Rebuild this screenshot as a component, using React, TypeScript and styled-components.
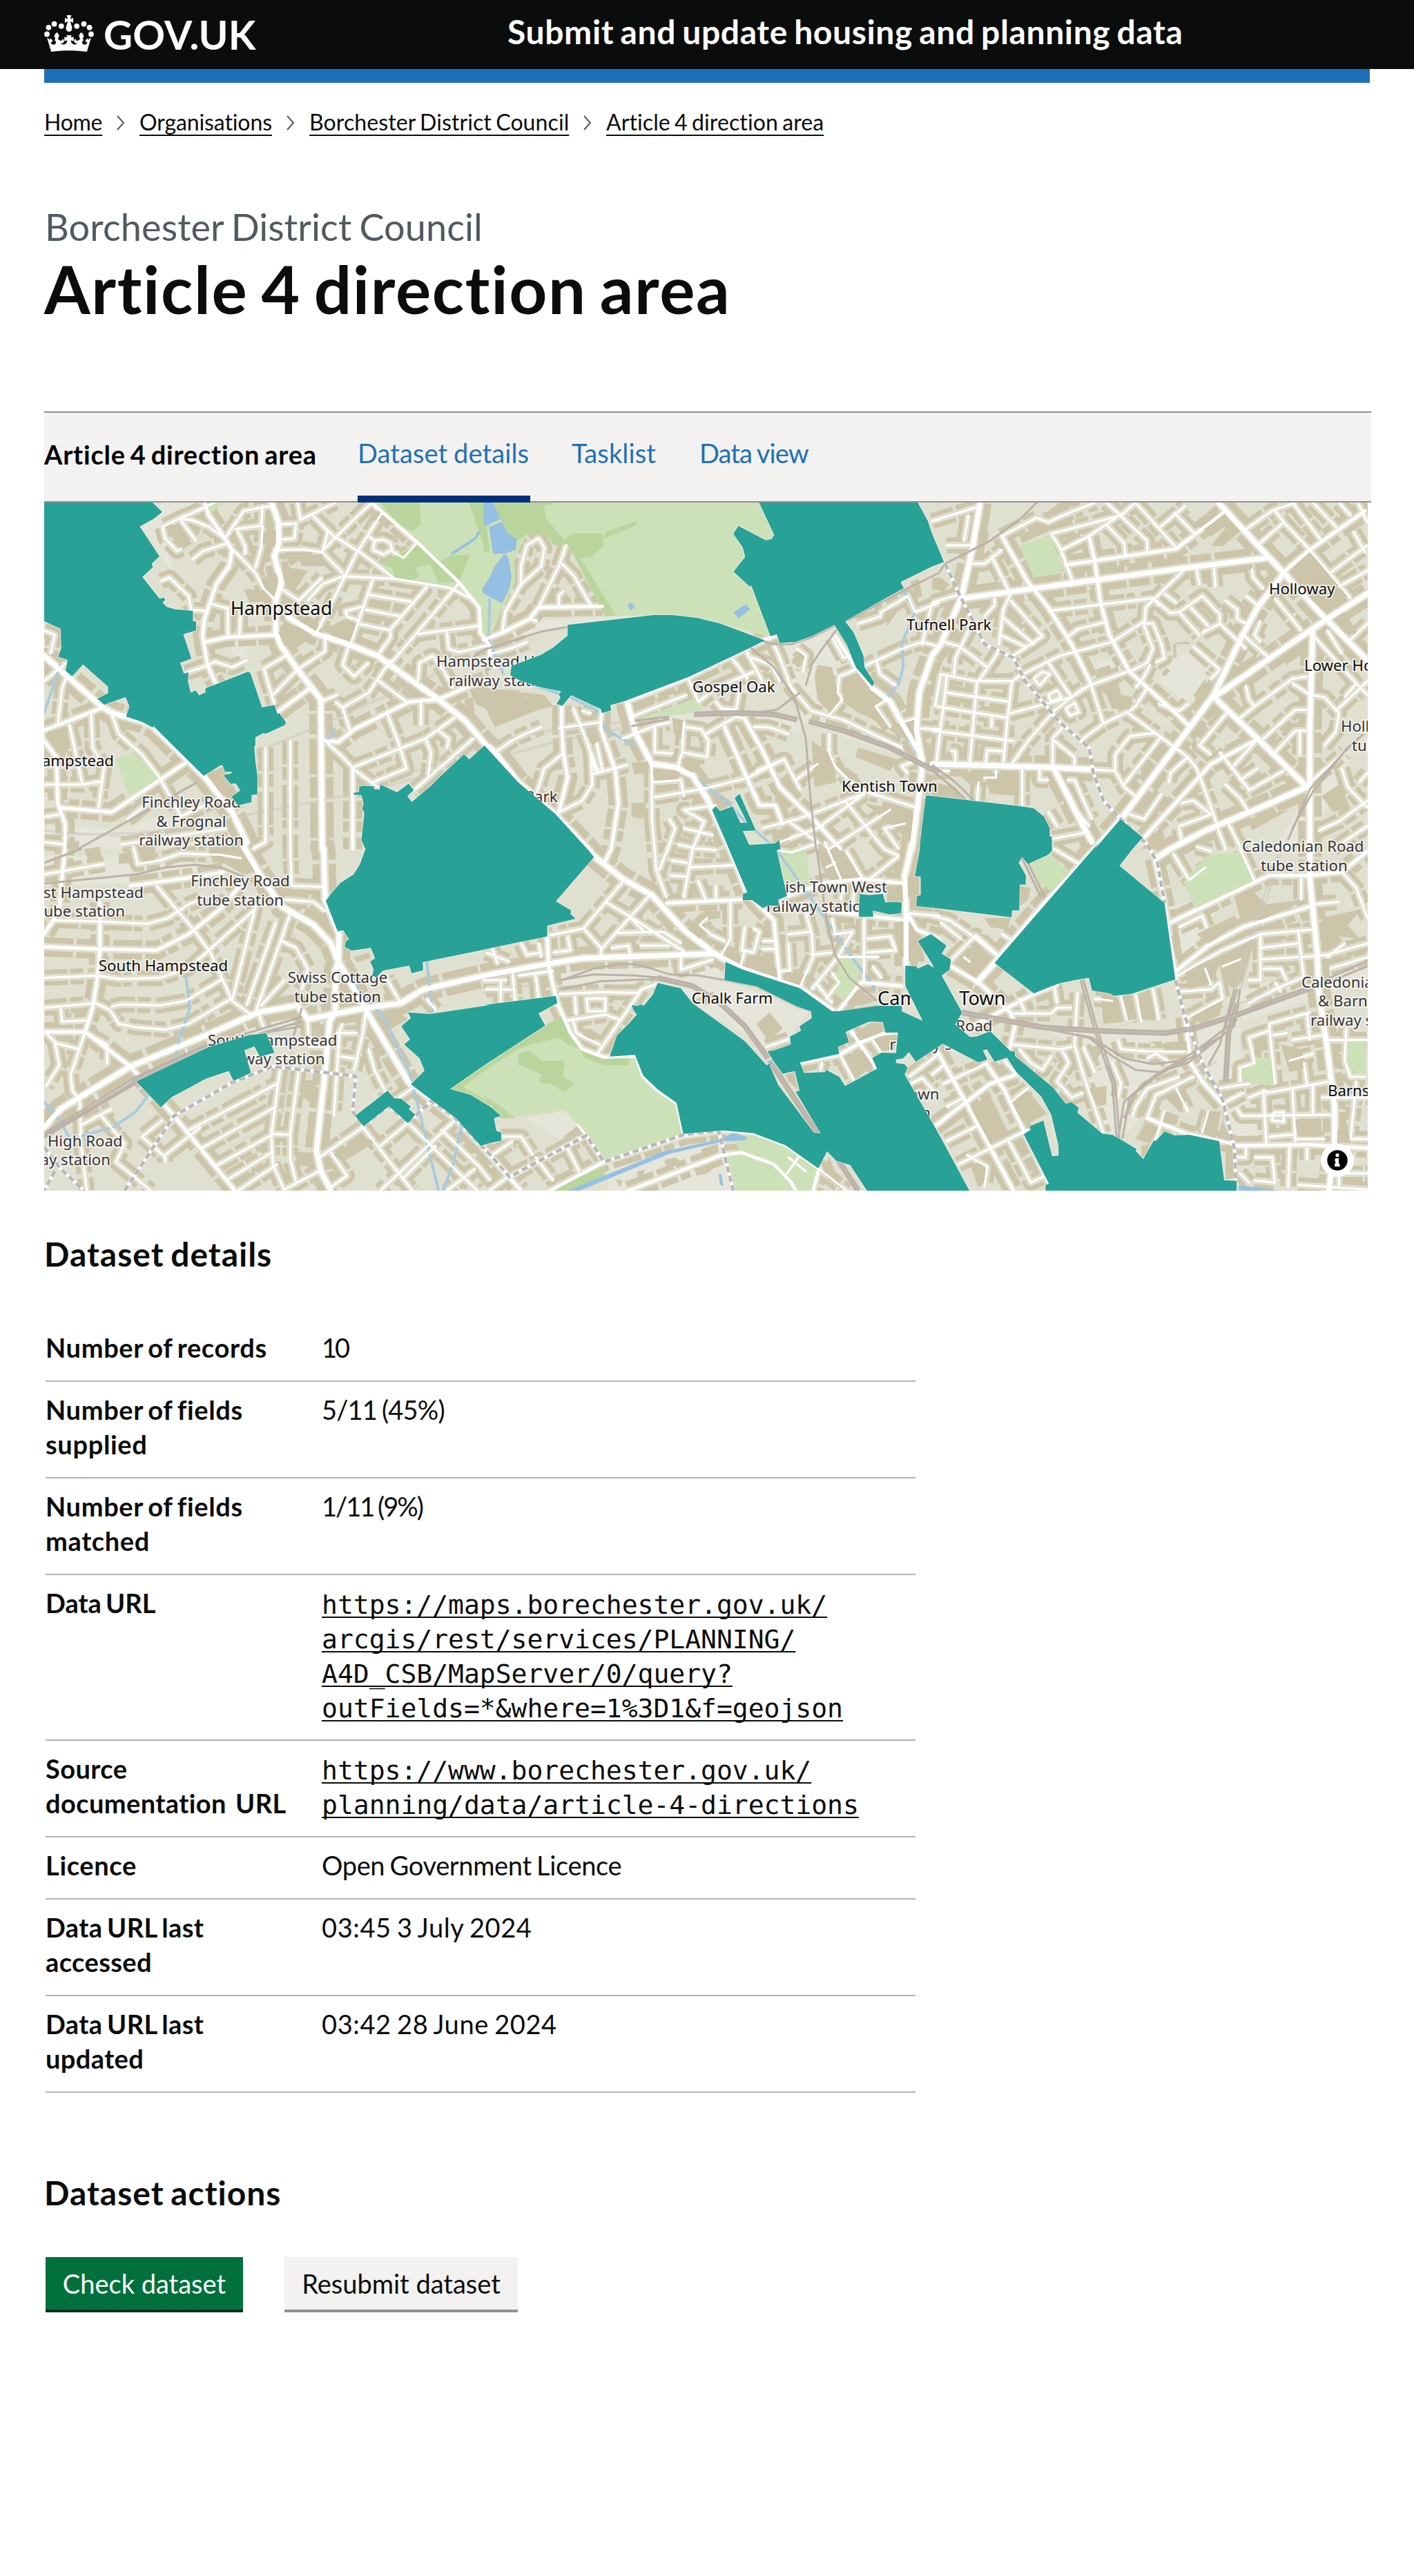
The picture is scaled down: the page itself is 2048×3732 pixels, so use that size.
import React from "react";
import styled, { createGlobalStyle } from "styled-components";

const ink = "#0b0c0c";
const sans = `Lato, "Open Sans", "Noto Sans", sans-serif`;

const GlobalStyle = createGlobalStyle`
  body {
    margin: 0;
    background: #fff;
    color: ${ink};
    font-family: ${sans};
    font-variant-ligatures: none;
    word-spacing: -3px;
  }
  *, *::before, *::after { box-sizing: border-box; }
  h1, h2, p, ol, ul, dl, dd, dt { margin: 0; padding: 0; font-weight: inherit; }
`;

const Page = styled.div`
  width: 2048px;
  min-height: 3732px;
  background: #fff;
`;

const Header = styled.header`
  height: 100px;
  padding: 0 64px;
  background: ${ink};
  color: #fff;
  display: flex;
`;

const Logo = styled.a`
  width: 671px;
  display: flex;
  gap: 14px;
  color: #fff;
  svg { margin-top: 22px; }
`;

const LogoText = styled.span`
  font-size: 58px;
  font-weight: 700;
  line-height: 99px;
  letter-spacing: 0.2px;
`;

const ServiceName = styled.span`
  font-size: 48px;
  font-weight: 700;
  line-height: 92px;
  letter-spacing: 0.62px;
  white-space: nowrap;
`;

const Main = styled.main`
  padding: 0 64px;
`;

const BlueBar = styled.div`
  height: 20px;
  background: #1d70b8;
`;

const Crumbs = styled.ol`
  display: flex;
  margin-top: 37px;
  height: 40px;
  list-style: none;
  word-spacing: -2px;
`;

const Crumb = styled.li<{ $w: number; $track: number }>`
  display: flex;
  align-items: center;
  font-size: 32px;
  line-height: 40px;
  white-space: nowrap;
  svg { margin: 2px 21px 0 21px; }
  a {
    width: ${(p) => p.$w}px;
    letter-spacing: ${(p) => p.$track}px;
    text-decoration: underline;
    text-decoration-thickness: 2px;
    text-underline-offset: 6px;
    text-decoration-skip-ink: none;
  }
`;

const Caption = styled.p`
  margin-top: 102px;
  padding-left: 1px;
  font-size: 54px;
  line-height: 60px;
  letter-spacing: 0.1px;
  color: #505a5f;
`;

const Title = styled.h1`
  margin-top: 9px;
  font-size: 96px;
  line-height: 100px;
  font-weight: 700;
  letter-spacing: 1.65px;
  word-spacing: -6px;
`;

const DatasetNav = styled.nav`
  margin-top: 128px;
  width: 1922px;
  height: 132px;
  display: flex;
  gap: 60px;
  background: #f3f2f1;
  box-shadow: inset 0 2px #929191, inset 0 -2px #929191;
  font-size: 38px;
  white-space: nowrap;
`;

const NavLabel = styled.span`
  width: 394px;
  color: #000;
  font-weight: 700;
  line-height: 124px;
  letter-spacing: 0.78px;
`;

const Tab = styled.a<{ $active?: boolean; $w: number; $track?: number }>`
  width: ${(p) => p.$w}px;
  height: 132px;
  line-height: 120px;
  letter-spacing: ${(p) => p.$track ?? 0}px;
  word-spacing: -1px;
  color: #1d70b8;
  border-bottom: 10px solid ${(p) => (p.$active ? "#003078" : "transparent")};
`;

const MapFrame = styled.div`
  width: 1917px;
  height: 997px;
  svg { display: block; }
`;

const SectionTitle = styled.h2<{ $top: number }>`
  margin-top: ${(p) => p.$top}px;
  margin-bottom: -2px;
  font-size: 48px;
  line-height: 50px;
  font-weight: 700;
  letter-spacing: 1px;
`;

const Summary = styled.dl`
  margin: 72px 0 0 2px;
  width: 1260px;
`;

const Row = styled.div`
  display: flex;
  padding: 15px 0 23px;
  border-bottom: 2px solid #b1b4b6;
  font-size: 38px;
  line-height: 50px;
`;

const Key = styled.dt<{ $track?: number }>`
  width: 400px;
  flex: none;
  font-weight: 700;
  letter-spacing: ${(p) => p.$track ?? 0.65}px;
  white-space: pre-line;
`;

const Value = styled.dd<{ $track?: number }>`
  letter-spacing: ${(p) => p.$track ?? 0}px;
  word-spacing: -2px;
  white-space: pre-line;
`;

const UrlValue = styled(Value)`
  padding-top: 3px;
  margin-bottom: -3px;
  font-family: "DejaVu Sans Mono", monospace;
  a {
    text-decoration: underline;
    text-decoration-thickness: 2px;
    text-underline-offset: 4px;
    text-decoration-skip-ink: none;
  }
`;

const Actions = styled.div`
  display: flex;
  gap: 60px;
  margin: 70px 0 0 2px;
`;

const Button = styled.button<{ $secondary?: boolean; $w: number }>`
  width: ${(p) => p.$w}px;
  height: 76px;
  padding: 1px 0 0;
  border: 0;
  font-family: ${sans};
  font-size: 38px;
  font-variant-ligatures: none;
  line-height: 75px;
  text-align: center;
  color: ${(p) => (p.$secondary ? ink : "#fff")};
  background: ${(p) => (p.$secondary ? "#f3f2f1" : "#00703c")};
  box-shadow: 0 4px 0 ${(p) => (p.$secondary ? "#929191" : "#002d18")};
`;

/* ---------- Map data ---------- */

const sheets: Record<string, [number, number]> = {
  NW: [50, 720], N: [700, 720], NE: [1350, 720],
  SW: [50, 1220], S: [700, 1220], SE: [1350, 1220],
};

function project(line: string): string {
  let origin = sheets.NW;
  const out: string[] = [];
  for (const token of line.trim().split(/\s+/)) {
    if (sheets[token]) { origin = sheets[token]; continue; }
    const [x, y] = token.split(",").map(Number);
    out.push(`${(origin[0] + x / 2.3758).toFixed(1)} ${(origin[1] + y / 3).toFixed(1)}`);
  }
  return "M" + out.join("L");
}
const lines = (all: string) => all.trim().split("\n").map(project).join("");
const areas = (all: string) => all.trim().split("\n").map((l) => project(l) + "Z").join("");

const majorRoads = lines(`
NW 33,690 235,915 270,940 370,975 410,1000 585,1215 680,1370 730,1500 SW 720,20 770,130 850,280 960,360 1020,440 1045,520 1065,560 1145,740 1290,1050
NW 815,24 840,110 840,200 825,260 850,370 830,450 830,590 850,650 905,750 985,880 990,1530 SW 995,30 1000,250 1048,400 1045,520 1035,560 1035,740 1015,780 1000,1000 970,1340 985,1430 1020,1515
NW 870,520 960,590 1080,640 1180,690 1300,800 1390,880 1480,970 1548,1070 N 40,1110 120,1240 240,1370 360,1530 S 380,60 480,160 580,230 690,380 790,480 890,550 1090,635 1200,733
SW 33,1240 90,1160 330,975 590,840 770,740 905,710 940,770 1140,720 1260,700 1340,640 1548,580 S 220,530 340,505 790,485
NE 165,24 140,220 100,440 30,640 N 1544,690 1500,850 1490,1010 1510,1150
N 1338,830 1400,890 1440,980 1500,1110 1510,1170 1500,1290 1475,1530 S 1475,10 1450,150 1455,300 1455,540
NE 110,440 480,375 860,310 1150,265
NE 985,24 1150,250 1210,330 1340,510 1498,710
NE 1205,340 1120,480 1060,620 970,860 840,1080 650,1400 560,1530 SE 380,280 215,525 155,610
NE 1498,420 1360,530 1220,650 970,870 1120,1050 1290,1260
NE 1310,580 1300,1000 1300,1260 1300,1500 SE 1300,160 1325,480 1330,640 1360,900 1385,1150 1385,1320 1365,1515
NE 1290,1260 1130,1350 940,1450 820,1530 SE 770,70
NE 415,1170 520,1430 550,1500
NE 0,1160 410,1175 555,1185
N 495,890 525,1030 580,1160 660,1175 720,1210 770,1310 850,1530 S 908,220
`);

const mediumRoads = lines(`
NW 1160,24 1200,70 1320,200 1460,370 1530,480 1535,590 1568,650 N 20,700 40,740
NW 33,1015 235,915
NW 585,24 600,80 655,180 680,230 670,300 625,380 585,530 578,600 595,730 625,815
NW 520,1155 265,1370 85,1350
NW 33,1060 75,1130 80,1330 105,1420 105,1530 SW 95,150 85,300 33,400
NW 590,630 660,610 830,600
NW 1390,880 1290,890 1100,1010 1045,1065 1000,1060
NW 1095,1180 1095,1530
NW 835,935 955,825
NW 1390,880 1500,820 1568,790
SW 33,825 175,825 330,975 480,1190 690,1515
SW 33,455 220,465 420,470 530,400 640,290 700,200
SW 1290,1050 1450,1205 1568,1360 S 0,1330 130,1515
SW 225,260 225,465 215,600 200,720 175,820
SW 330,190 560,150 650,130
N 0,620 65,590 160,530 190,480 410,475
N 490,890 705,785 970,620 1010,600
N 270,905 270,1000 275,1110 290,1220 260,1370
N 405,930 405,1010 455,1190 465,1330 440,1530 S 420,80
N 900,965 960,1100 1020,1260 1150,1420 1230,1530
N 830,1000 900,1200 950,1340 1005,1340 1030,1420
N 1210,600 1280,740 1338,830
S 220,410 225,540 255,700 300,830 340,900 415,935 525,930 550,1020 600,1080 665,1135 690,1270
S 908,220 960,290 1000,340 1020,600
S 630,265 890,250
S 1045,235 1180,175 1305,160 1450,180
S 1180,300 1455,340
S 1225,730 1300,610 1440,625
S 230,1515 415,1390 690,1275 825,1253 930,1265 1040,1318 1155,1418 1135,1515
S 500,1515 820,1360 890,1350 1000,1400 1060,1480 1075,1515
S 1090,960 1225,925 1300,870 1380,830 1425,828
S 1265,820 1355,985
S 1455,300 1490,380 1568,420
SE 820,350 1000,240 1160,145 1300,145 1410,130 1498,40
SE 840,560 950,450 1070,370 1300,280
SE 65,540 160,610 230,690 270,740 285,800 265,910
SE 140,800 260,720 350,660 430,620
SE 0,870 120,1140 280,1515
SE 190,970 250,1080 400,1480
SE 10,1235 200,1050 290,1010
SE 870,760 890,960 930,1040 1000,1140
SE 1040,1320 1300,1315 1498,1330
SE 740,1200 880,1270 1000,1300 1040,1315
SE 765,70 800,265 840,600
NE 240,170 330,370 400,480 480,640 550,820
NE 540,170 560,280 580,460 610,600 680,760 830,930 880,990
NE 460,295 840,225 1010,60
NE 1215,320 1300,230 1490,60
NE 1110,1060 960,1160 730,1480
`);

const minorRoads = lines(`
NW 110,780 95,830 80,990
NW 33,800 110,720
NW 33,580 70,600 55,680
NW 655,180 720,60 810,40
NW 500,95 540,100 600,130 655,180
NW 520,80 440,130 450,180 490,235 505,225
NW 500,95 555,190
NW 500,95 620,24
NW 545,270 580,235 655,205
NW 680,230 700,250 760,330 790,400 830,450
NW 690,140 780,125 785,40
NW 760,310 780,220 785,130
NW 700,150 725,215 725,250
NW 840,120 900,115 895,180 850,185
NW 830,230 930,228 990,240 1060,330
NW 905,24 915,100 1035,24
NW 960,85 1030,170 1120,240 1235,350
NW 1160,24 1040,170 990,235
NW 960,85 1010,150 990,240
NW 1195,70 1110,240 1070,340 1035,430 970,590
NW 1070,345 1240,355 1430,395 1500,440
NW 1070,340 990,380 940,450
NW 850,400 910,450 990,350
NW 1165,355 1090,630
NW 1150,425 1295,455
NW 1140,490 1265,520
NW 1110,550 1225,580
NW 1135,475 1070,495 1075,520 1110,535
NW 1350,390 1225,575 1225,610 1180,690
NW 1460,375 1215,740
NW 1530,560 1320,595
NW 1418,580 1425,660 1460,675 1560,645
NW 1150,170 1170,190 1165,230 1200,250 1230,230 1225,200 1200,185 1170,190
NW 1230,235 1270,265 1315,200
NW 665,480 665,600
NW 710,480 705,600
NW 610,465 665,485
NW 435,365 465,350 530,430 540,490 585,495
NW 590,735 620,715 680,740 730,710
NW 520,765 590,735
NW 790,745 865,690
NW 790,750 825,900
NW 820,860 905,750
NW 905,750 1000,670 1000,620
NW 1090,1170 1060,1130 1000,1060
NW 1225,710 1150,850 1060,915 1085,1015
NW 1035,890 1060,915
NW 1180,795 1280,890
NW 1080,650 1060,730 1100,780 1150,720
NW 1215,945 1250,1060 1280,1180 1165,1240
NW 1095,1175 1345,1050 1445,960
NW 1345,1050 1365,1110 1355,1210
NW 1390,1015 1425,1050 1420,1090
NW 1510,1050 1300,1280
NW 1095,1180 1180,1260
NW 1320,800 1325,720 1370,690 1410,760 1440,830
NW 1330,890 1330,990
NW 880,1060 880,1530 SW 885,190 1000,195
NW 795,1090 795,1500 750,1530
NW 985,890 1040,860
NW 195,945 200,1090 240,1170 220,1350
NW 120,990 165,1250
NW 265,940 290,1030 370,1120 430,1220 500,1380
NW 33,1250 165,1250 235,1235
NW 33,1390 85,1380
NW 500,1390 620,1320
NW 300,1510 660,1440
NW 320,1400 400,1320
NW 33,1500 105,1510
SW 33,140 240,95
SW 340,20 355,95 430,80 500,50 640,55 710,70
SW 70,340 220,345 390,355 460,330 530,270 570,250
SW 175,820 125,1010 130,1080 155,1120 160,1270
SW 420,190 550,385 605,480 680,690 745,750
SW 33,590 220,580 290,595 430,590 530,550 600,470 760,290
SW 33,720 210,700 260,730 290,790 350,805 450,815 530,790 670,685
SW 265,715 300,705 430,710 520,690 640,600
SW 90,720 95,780 180,775
SW 760,280 680,690
SW 830,350 730,710
SW 880,310 760,740
SW 860,600 780,710
SW 850,430 900,460 940,550 920,640
SW 860,250 960,260 1000,300
SW 70,870 85,970 40,1060
SW 40,830 75,875 155,900
SW 175,830 250,880 250,960
SW 770,740 790,810
SW 845,985 815,1270 820,1400 860,1515
SW 910,985 880,1270 880,1380 900,1475
SW 520,1260 835,1050
SW 575,1330 830,1150
SW 620,1410 820,1270
SW 660,1470 815,1350
SW 700,1515 835,1400
SW 860,1510 980,1430
SW 820,1268 880,1272
SW 1140,740 1130,830 1100,990
SW 1060,790 1050,820 1030,1190
SW 1040,830 1110,830
SW 1040,930 1100,940
SW 940,780 945,890 1010,890
SW 1150,900 1170,990 1210,1090
SW 1130,1240 1300,1515
SW 1285,1220 1470,1450 1525,1515
SW 1130,1240 980,1370
SW 1300,1070 1220,1140
SW 1285,1220 1190,1320
SW 1445,1210 1370,1300 1190,1515
SW 1400,1250 1530,1410 1568,1470
SW 1515,1420 1420,1515
SW 1380,1320 1270,1460
SW 1020,1350 1075,1450 1020,1500
SW 230,1190 310,1310 280,1390 400,1515
SW 160,1230 265,1160
SW 370,1280 450,1370 450,1390
SW 450,1360 570,1240
SW 440,1210 370,1280
SW 155,1270 180,1515
SW 1260,700 1210,590
SW 1350,680 1380,730
N 65,590 75,500 130,380 200,300 210,220 190,180 150,210 130,300 130,380
N 285,210 260,300 190,480
N 270,290 310,340 370,470
N 260,480 260,430 275,410
N 30,680 90,660 150,630
N 160,530 185,540
N 260,1005 400,980
N 310,920 340,1010 370,1110 395,1190
N 375,1205 495,1165
N 340,930 370,940
N 360,1070 385,1190
N 410,1190 390,1070
N 270,1120 210,1180 185,1280
N 260,1370 340,1320 375,1250 370,1110
N 40,1110 110,1050 200,1000
N 580,1160 580,1400 590,1530 S 595,120 630,240
N 590,1305 770,1265 910,1220 1035,1140
N 765,1030 870,955 900,965
N 690,980 685,1110 670,1170
N 685,1110 770,1130 775,1060 750,1010 695,1000
N 590,1000 590,1110 650,1115
N 480,1050 560,1010 600,990 640,980
N 580,1240 680,1230 690,1300
N 855,700 910,790
N 905,670 960,800
N 925,700 990,730 1020,800
N 870,925 880,850
N 800,890 820,920 870,925
N 705,790 740,890 800,830 930,760
N 520,950 700,860
N 1000,640 1030,730 1060,830 1130,930 1240,970 1440,1090
N 1080,660 1110,690 1100,760
N 1420,820 1365,770 1355,720
N 1225,780 1320,730 1440,660 1510,630 1568,650
N 1485,500 1568,460
N 1540,480 1510,640
N 1485,500 1460,430 1370,500 1365,520 1290,550
N 1200,610 1240,700 1260,690
N 1440,980 1490,960
N 1500,1005 1568,1010
N 1225,780 1220,850 1235,880 1190,950
N 1400,1000 1350,910 1390,880
N 1190,1030 1190,1110 1210,1170 1290,1270 1490,1350
N 1310,1290 1080,1400 960,1440
N 930,1000 980,1000 1050,1030
N 940,1190 1035,1140 1090,1270
N 1075,1230 1150,1160
N 1150,1440 1310,1290
N 1250,1330 1380,1530 S 1430,60
N 1400,1360 1190,1530
N 1050,1410 1150,1500
N 1450,1420 1380,1440 1430,1530
N 1460,1200 1440,1170 1480,1150
N 1170,1430 1020,1500
N 800,1340 690,1360 760,1410 720,1530 S 690,240
N 640,1400 660,1440 635,1530 S 605,120
N 690,1440 790,1470
S 650,80 700,90
S 645,145 700,150
S 710,110 865,100
S 740,170 765,250
S 800,190 800,250
S 670,10 720,25 800,35
S 850,255 850,420 820,490
S 770,330 745,360 780,400 830,430
S 485,165 345,375 230,405
S 345,375 405,460 405,490
S 420,260 500,320 690,475
S 500,320 550,385
S 570,235 410,460
S 455,395 615,390
S 620,390 680,440
S 440,460 500,450 505,485
S 540,450 640,450
S 680,485 680,555 790,510
S 262,660 400,652 530,655 545,640 600,615
S 545,640 395,915
S 290,775 420,750 465,770
S 355,680 420,680 420,735 360,735 355,680
S 315,670 320,750
S 310,780 320,830 400,880
S 290,410 300,470 240,480
S 900,370 890,470 930,480 950,390 930,375
S 885,540 900,470
S 960,430 1010,430
S 960,465 1010,465
S 1110,310 1130,400 1135,500 1090,630
S 1050,400 1120,390
S 1050,440 1055,560 1020,560
S 1130,490 1200,480
S 1200,330 1210,400 1270,390 1220,500 1130,640
S 1310,335 1310,600
S 1320,420 1400,410 1420,470 1320,480
S 1220,500 1360,500
S 1340,540 1370,590
S 1200,570 1225,610 1180,680
S 1150,620 1200,700
S 1175,0 1230,160
S 1250,40 1310,170
S 1430,60 1330,160
S 1180,110 1210,90
S 1010,35 1060,45 1150,5
S 1240,190 1230,250
S 1280,180 1270,270
S 1465,310 1568,320
S 100,560 110,690
S 180,580 190,680
S 0,600 80,600
S 60,600 60,700
S 130,440 150,490 200,480
S 10,480 90,520
S 30,460 50,530
S 190,440 200,500
S 10,640 100,640
S 120,580 240,560
S 975,890 1055,855
S 415,1390 355,1275 325,1230
S 90,1455 355,1275
S 180,1370 240,1470
S 60,1280 130,1280 170,1360
S 285,1320 330,1430
S 20,1515 90,1450
S 20,1370 100,1300
S 1230,930 1275,1035
S 1335,850 1370,915
S 1165,960 1160,990
S 1160,1425 1250,1515
S 1465,1020 1568,920
S 1470,1050 1510,1025 1550,1080
S 1050,1370 1110,1430
S 1045,1440 1090,1360
NE 0,105 165,40
NE 50,210 135,210
NE 110,190 125,80
NE 140,290 180,290 240,230
NE 0,460 100,420
NE 240,170 360,90 400,110 450,80 560,24
NE 205,260 270,420 245,490 230,640
NE 215,440 215,470 180,520
NE 270,450 380,605 280,690
NE 240,520 350,640
NE 235,600 320,650
NE 410,160 650,80 700,24
NE 410,160 440,220 485,370
NE 445,230 540,170 650,75
NE 600,120 660,200 665,250
NE 600,24 740,190 740,235
NE 700,24 840,220
NE 835,70 900,155
NE 785,130 870,40
NE 400,495 760,440 780,470
NE 865,320 735,480 730,560 760,660 740,720 680,760
NE 465,610 500,575 590,545
NE 320,765 440,690 620,630 730,540
NE 400,720 480,870
NE 270,940 480,870 540,820 670,760
NE 350,790 380,760 405,770 370,820 350,790
NE 400,860 430,840 445,870 410,890 400,860
NE 460,920 490,895 505,935 475,950 460,920
NE 40,630 95,650 190,740
NE 130,570 80,700 75,770
NE 230,670 160,800
NE 30,770 150,800 275,800 310,770
NE 30,770 10,910
NE 50,780 45,850 15,1150
NE 155,800 130,1150
NE 275,800 260,960 245,1160
NE 50,850 265,890
NE 15,910 260,960
NE 0,1015 280,1060
NE 205,960 205,1000
NE 185,1150 190,1100 245,1105
NE 65,1105 80,1105 80,1150
NE 275,1160 330,1060 420,930 520,830
NE 310,1180 310,1340
NE 370,1190 370,1230 400,1230
NE 0,1195 60,1190
NE 220,1190 220,1220 180,1220
NE 160,1240 155,1320
NE 415,1180 415,1050 450,1000
NE 420,1060 490,1130 490,1180
NE 465,1230 490,1230 550,1400
NE 470,1290 500,1370 540,1430
NE 520,1050 590,985 670,935 880,1130 910,1180
NE 550,830 590,985
NE 770,1025 680,1040 630,1120 630,1190 660,1260 710,1310
NE 555,1185 630,1190
NE 790,1040 660,1250
NE 880,1130 820,1200 815,1240
NE 790,1290 730,1400 680,1380
NE 1020,930 920,1080 960,1120
NE 990,1110 1090,1270
NE 1090,1275 1210,1190
NE 1030,1180 1115,1060
NE 1060,1230 1120,1180
NE 910,1180 940,1280 980,1420
NE 860,1330 900,1320 960,1380 850,1430
NE 1010,1250 1060,1310 1090,1370
NE 770,450 820,505 850,500 930,430 990,510 990,550
NE 930,590 990,550 1080,660
NE 1070,600 1160,700
NE 850,500 920,600
NE 890,480 950,560
NE 730,550 760,550 790,640 800,700 770,720
NE 750,730 730,780 700,830
NE 680,760 740,830 700,910 680,930
NE 900,650 990,750 960,790
NE 780,900 850,930 880,900
NE 1010,450 1050,490 1050,530 1080,550
NE 1080,430 1120,470
NE 800,420 840,460
NE 910,310 920,380
NE 970,310 975,390
NE 1100,315 1105,350 1140,400
NE 1120,210 1210,110 1180,60
NE 1080,140 1170,60 1250,24
NE 1210,110 1300,230 1440,440
NE 1240,24 1340,190
NE 1370,330 1498,210
NE 1310,24 1390,130
NE 1400,24 1440,80
NE 1450,150 1490,240
NE 1400,390 1498,320
NE 1465,24 1498,110
NE 1180,440 1270,580
NE 1130,540 1110,600 1130,630
NE 1310,600 1460,810 1498,860
NE 1360,580 1410,680
NE 1440,620 1498,550
NE 1300,860 1350,870 1400,940 1390,1020 1350,1080
NE 1300,925 1250,925 1140,1050
NE 1290,1015 1250,1015 1180,1110
NE 1265,1020 1265,1120
NE 1290,780 1240,790 1110,910 1060,960
NE 1240,810 1300,860
NE 1080,820 1090,880 1110,910
NE 1390,930 1498,800
NE 1420,870 1460,810
NE 1300,1240 1420,1110
NE 1410,1180 1430,1260 1498,1350
NE 1470,1240 1498,1200
NE 1330,1450 1400,1410 1498,1320
NE 1380,1530 1498,1430
NE 980,1430 1010,1530
NE 1020,1420 1060,1520
NE 870,1500 940,1450
NE 850,1440 860,1500
NE 400,1370 430,1430
NE 415,1485 520,1460
SE 845,580 1000,470 1130,400 1310,380
SE 830,50 885,165 940,110
SE 850,370 930,320 945,370
SE 910,20 960,40
SE 1060,30 1110,170
SE 60,520 150,405 280,550
SE 0,320 60,340 130,400 220,490
SE 30,350 100,420
SE 420,30 500,90
SE 240,400 290,440
SE 300,680 320,740
SE 110,500 130,520
SE 500,655 490,880 520,1010 590,1265
SE 270,745 410,745 430,720 480,720
SE 420,620 430,700
SE 275,880 440,900 480,890
SE 300,900 340,960 380,990 410,930
SE 450,910 470,960 430,1040 480,1110 520,1090
SE 520,890 560,1000
SE 560,680 620,690
SE 650,670 670,770
SE 700,660 720,780
SE 760,640 780,770
SE 620,960 650,1050 640,1110
SE 640,860 650,900 740,910 870,910
SE 740,940 770,920 810,950
SE 90,1400 330,1250
SE 50,1300 160,1230
SE 120,1360 190,1410 180,1500
SE 260,1290 340,1480 390,1450
SE 0,1010 40,970
SE 40,1050 190,960
SE 50,1150 110,1110
SE 270,1130 330,1070
SE 250,950 290,1010
SE 740,1200 770,1100 900,1020
SE 850,1020 740,1070 700,1150 690,1190
SE 770,1290 800,1170
SE 840,1070 880,1170
SE 950,1170 930,1260
SE 990,1070 1090,1050
SE 1010,1130 1070,1090
SE 870,770 1000,680 990,610
SE 850,650 960,640 990,610
SE 940,550 960,620
SE 1000,540 1060,510
SE 1130,410 1130,600 1090,600
SE 1130,460 1260,440
SE 1130,510 1260,500
SE 1140,550 1200,550 1220,600
SE 1090,700 1180,640 1270,590
SE 1180,610 1200,650
SE 1260,390 1280,600
SE 1310,270 1400,260
SE 1270,160 1270,250
SE 1410,130 1460,200 1498,330
SE 1360,500 1420,440
SE 1270,500 1360,490 1498,440
SE 1370,550 1498,500
SE 1150,1090 1370,1040
SE 1090,1110 1150,1080
SE 1060,1040 1060,980 1110,960 1090,850 1160,820
SE 1160,790 1300,740
SE 1160,800 1180,1050
SE 1170,840 1220,830
SE 1230,950 1310,920
SE 1240,860 1340,840
SE 1290,750 1300,860
SE 1280,960 1290,1060
SE 1140,1080 1150,1310
SE 1240,1070 1250,1300
SE 1050,1160 1065,1190 1380,1185
SE 1160,1280 1250,1270
SE 1250,1290 1350,1290
SE 1310,1060 1310,1180
SE 1175,1175 1210,1175 1210,1215 1170,1210 1175,1175
SE 1360,860 1498,860
SE 1425,810 1420,950 1440,1020 1490,1020
SE 1340,1110 1498,1110
SE 1460,1040 1440,1290 1498,1290
SE 1230,1325 1225,1500
SE 1080,1330 1080,1370 1050,1370
SE 1110,1370 1170,1370 1180,1480 1110,1470
SE 1060,1440 1090,1480
SE 1260,1490 1498,1510
SE 1290,1330 1290,1380
SE 1400,1440 1498,1440
SE 1400,1500 1400,1440
`);

const railMain = lines(`
NE 360,24 300,100 200,190 45,290 N 1568,330 1440,410 1280,520 1208,560 1130,610 1060,640 1000,640 930,615
N 290,565 200,585 100,625 0,665 NW 1510,695
N 1220,570 1160,670 1130,730 1110,820
N 1090,850 1010,925 930,938
N 920,655 1000,740 1070,870 1110,1050 1125,1300 1145,1530 S 1150,50 1180,330 1210,490 1260,590 1355,690
N 520,972 640,955
N 510,996 640,965
NE 0,1165 80,1240 145,1320
NE 0,1190 60,1250 120,1320
SW 33,1265 340,1030 600,880 920,760
SW 33,1275 340,1045 600,895 920,780
SW 33,1285 340,1055 720,845 920,800
SW 33,180 350,140 450,110 550,98 640,110 720,150
SW 33,90 160,30 NW 150,1530 560,1240
S 270,600 380,550 460,532 520,530 580,550 640,575 740,580 840,602 940,627 1080,715 1130,735
S 260,600 380,575 520,580 620,590 720,630
S 270,640 400,605 600,595
S 1225,737 1340,715 1380,712
SE 510,595 560,820 620,1050 635,1290
SE 520,595 570,820 630,1050 645,1290
SE 380,810 550,850 660,940 760,965 850,950 1000,840 1050,640
SE 350,800 540,850 620,930 700,990 780,1000 880,960 1010,830
SE 640,1290 660,1130 750,1030 900,930 1010,830
SE 655,1290 680,1110 770,1010 900,915 1050,770
SE 660,1200 700,1090 800,990 920,920 1040,800 1060,640
SE 310,70 375,240
SE 320,65 388,240
SE 1498,515 1300,630
SE 1498,540 1300,640
SE 950,970 990,880 1040,640
NE 1240,1440 1310,1280 1430,1090 1485,1030
NE 1225,1490 1300,1270 1440,1080
SW 920,720 890,850
`);
const railHeavy = lines(`
N 725,945 880,938 1000,945 1080,968
N 1120,975 1250,1020 1400,1090 1568,1200
SW 330,1040 600,885
S 600,590 720,625 820,705 900,800 980,940
S 985,950 1150,1265
S 1215,1370 1290,1515
SE 100,740 380,805 560,820 800,830 900,810 1040,755 1300,635
SE 1010,1040 1020,830 1050,700
`);
const railFaint = lines(`
NW 1500,700 990,990 760,1110
NW 1568,1070 1100,1290 660,1400
NW 1568,1130 1180,1270
N 0,1070 250,1010 400,990 520,975
N 60,1130 260,1060 510,996
SW 870,330 920,500 900,720
SW 890,860 850,1200
SW 940,770 1260,690 1568,590 S 220,545
S 0,655 260,600
SE 1060,640 1110,420 1200,50 NE 1225,1480
SE 1040,640 1095,420 1190,50
SE 700,1300 760,1150 900,1020 980,950
SE 1005,1050 1000,1290
SE 1050,700 1300,640
NW 33,1450 350,1480 560,1430
NW 33,1470 350,1460 500,1440
`);

const boundary = lines(`
NE 45,290 100,440 150,560 180,640 280,700 320,800 440,980 540,1090 555,1200 590,1320 650,1400 740,1510 SE 775,90 800,265
SE 838,600 870,760 930,960 1000,1120 1040,1330 1045,1470
SW 310,1515 480,1190 680,1045 820,975 1105,1017 1095,1170 1130,1235 1220,1148 1285,1220 1365,1125 1440,1190 1568,1360 S 90,1455 355,1275 415,1390 690,1272 810,1255 860,1515
SW 33,1325 90,1420 170,1515
SW 70,1430 33,1515
`);

const streams = lines(`
NW 90,730 70,800 33,940
NW 1035,1005 1000,1070
N 22,440 18,620 70,770
N 120,800 190,825 300,870 395,930 420,1010 520,1080
N 720,1210 850,1340 900,1410 990,1510 S 1010,35 1080,160 1170,320 1240,450 1350,640
N 1440,390 1485,500 1440,640 1445,740 1430,810 1390,870 1430,970 1500,1130
SW 520,580 535,720 500,850 480,950 350,1170 270,1240 150,1280
SW 1100,620 1200,760 1290,1000 1340,1250 1390,1515
SW 1350,520 1370,740
SW 1470,1230 1440,1400 1405,1515
SW 33,1130 90,1210 120,1290
`);

const openLand = areas(`
NW 440,24 580,24 600,100 520,80 440,130 480,340 430,240 370,140
NW 665,615 735,615 730,700 690,700
NW 430,1390 640,1440 540,1530 33,1530 33,1430 300,1440
SW 33,60 330,60 560,90 720,140 560,130 330,180 33,190
SW 90,1160 330,990 780,750 920,700 920,820 720,840 350,1040 100,1260
N 290,565 0,660 0,620 160,540 400,520 585,515
N 970,630 1208,565 1240,760 1190,1000 1440,1090 1490,1150 1100,980
N 520,960 900,930 1120,975 1080,1020 520,1010
S 220,520 790,500 830,600 1120,735 1050,850 980,900 720,700 600,600 260,650
S 150,1200 280,1168 330,1230 260,1290
S 430,1390 820,1280 860,1515 430,1515
NE 800,740 880,670 950,700 980,760 900,890 860,880 780,800
NE 560,720 640,690 680,760 570,780
NE 590,1420 650,1400 820,1530 730,1530
NE 1300,1260 1440,1100 1400,1300 1240,1530 1180,1530
SE 790,280 1010,240 840,560
SE 380,810 900,830 870,920 900,960 650,1290 590,1265 490,880
SE 900,830 1060,760 1060,1040 1000,1140 900,960
SE 1060,640 1498,500 1498,600 1070,780
SE 1010,1130 1150,1090 1130,1310 1050,1320
`);

const buildings = areas(`
NW 450,130 470,115 540,200 505,235
NW 785,150 840,145 830,220 785,205
NW 780,350 840,330 830,450 790,410
NW 860,240 960,240 880,300
NW 720,400 790,405 820,450 740,460
NW 830,590 900,560 960,600 900,660 850,640
NW 870,520 970,540 1000,600 940,590
NW 1020,560 1070,530 1110,550 1090,630 1020,600
NW 1160,100 1200,30 1250,40 1295,95 1260,130
NW 45,1020 115,1000 115,1110 75,1110
NW 1500,850 1568,830 1568,930 1520,900
NW 580,1215 650,1170 680,1250 700,1290 650,1300
NW 850,300 940,320 900,400 860,370
NW 900,250 990,250 1000,300 920,300
NW 1480,880 1510,870 1515,950 1480,940
NW 110,1495 155,1495 150,1530 110,1530
SW 170,30 225,20 230,70 185,80
SW 365,20 415,10 415,80 370,95
SW 290,50 335,45 330,90 290,95
SW 600,20 700,10 760,130 720,140 650,90 600,60
SW 33,1180 80,1160 85,1200 33,1240
SW 920,1035 970,1035 960,1145 915,1100
SW 900,1345 955,1350 945,1410 900,1400
SW 1030,1360 1120,1280 1180,1300 1060,1390
SW 1180,740 1240,725 1285,770 1220,815
SW 1100,500 1150,480 1155,505 1110,522
N 0,835 120,840 190,925 40,1000 0,900
N 130,850 210,860 240,910 190,925
N 1060,720 1080,670 1110,690 1090,740
N 1150,730 1200,740 1215,830 1230,880 1200,950 1150,880 1140,780
N 1235,820 1290,760 1390,870 1350,910 1400,1000 1480,960 1500,1090 1420,1030 1330,960 1280,930 1240,890
N 1470,370 1498,355 1510,430 1490,440
N 1290,1090 1425,1140 1400,1190 1280,1130
N 1200,1140 1290,1210 1260,1240
N 1130,1060 1200,1120 1215,1240 1140,1260
N 1380,500 1440,470 1390,560
N 1310,1330 1480,1370 1470,1500 1400,1420
N 680,1140 750,1140 740,1190 700,1200
N 510,1155 570,1150 570,1200 520,1205
N 580,1180 680,1190 670,1230 590,1235
N 510,1330 560,1330 550,1400 510,1390
N 650,960 690,970 680,1050 655,1030
N 990,1450 1060,1440 1050,1500 1000,1520
N 815,1290 860,1330 820,1365 790,1340
S 700,380 760,300 815,300 815,330 760,340 775,400 740,420
S 920,490 990,500 1010,560 1015,600 890,545
S 810,440 870,460 900,540 830,500
S 1040,560 1130,580 1090,630 1030,600
S 1150,30 1230,20 1300,160 1200,180 1165,110
S 940,790 985,740 1030,810 980,865
S 1385,190 1440,185 1450,260 1390,260
S 1460,150 1500,150 1500,235 1460,240
S 1250,870 1330,785 1375,785 1380,830 1300,860
S 1340,850 1425,835 1418,900 1370,910
S 1240,930 1310,900 1345,970 1280,1030
S 1240,700 1290,640 1350,690 1300,710
S 1420,350 1470,350 1500,410 1520,520 1460,520 1430,480
S 340,830 365,810 405,840 370,870
S 275,1280 325,1235 340,1270 290,1290
S 625,1380 660,1370 680,1390 650,1415 625,1400
S 725,1420 790,1400 810,1400 770,1440 735,1450
S 455,1465 480,1470 470,1500
S 530,1430 555,1425 550,1455 530,1450
S 750,1335 805,1310 810,1340 755,1365
S 1165,1430 1190,1370 1240,1515 1190,1470
S 1420,350 1450,340 1455,500 1430,500
S 720,690 790,650 820,700 760,710
S 1040,1010 1070,1000 1085,1080 1050,1040
NE 960,210 1030,105 1060,150 1000,215
NE 900,110 1000,60 1030,110 960,170
NE 300,170 380,115 400,150 310,200
NE 1230,320 1300,240 1430,430 1360,510 1290,430
NE 1380,530 1420,500 1470,600 1420,590
NE 1200,690 1280,620 1295,660 1220,730
NE 570,830 640,805 650,860 690,870 680,920 620,920 600,860
NE 565,750 610,730 620,755 570,775
NE 160,155 195,155 190,205 160,205
NE 850,630 890,630 885,640 840,640 840,700 830,700 830,640
NE 790,770 805,740 820,755 800,780
NE 900,860 940,790 950,840 910,885
NE 1340,1300 1400,1250 1440,1350 1380,1370
NE 90,1200 170,1190 180,1260 130,1250
NE 180,1200 300,1200 300,1300 200,1290
NE 1090,1400 1230,1360 1100,1450
NE 0,1240 80,1260 120,1320 0,1300
NE 720,1530 790,1430 800,1480 770,1530
NE 0,350 30,350 60,380 40,410 0,400
NE 380,80 440,24 500,24 400,90
SE 1040,235 1100,210 1150,270 1290,250 1130,340 1060,330
SE 910,400 1040,320 1060,350 950,440
SE 870,560 1000,490 1110,420 1070,600 1040,640 1000,600 990,530 960,610 880,640
SE 880,760 1000,690 990,750 930,790
SE 580,655 630,665 660,780 590,790
SE 650,670 690,670 705,770 665,775
SE 710,660 750,645 770,770 720,770
SE 90,540 150,430 205,500 150,590
SE 540,1070 600,1060 600,1140 570,1150
SE 700,1290 740,1220 780,1240 750,1310
SE 795,1165 850,1190 840,1230 790,1215
SE 800,1110 870,1060 880,1110 850,1170
SE 925,1260 940,1170 995,1170 975,1290
SE 980,1290 1000,1210 1030,1300
SE 130,1150 200,1100 265,1270 200,1315
SE 265,1120 330,1080 395,1180 320,1230
SE 1340,330 1480,290 1430,360 1470,420 1400,410 1390,460 1340,460
SE 1200,880 1270,900 1290,980 1230,1000
SE 1250,1210 1340,1200 1340,1280 1260,1280
SE 1390,1250 1430,1240 1440,1300 1390,1310
SE 1110,860 1140,840 1150,900 1110,930
SE 540,890 600,880 560,960
SE 800,870 880,865 880,905 800,905
SE 745,870 790,865 790,890
SE 300,190 340,200 330,250 300,280
SE 180,330 270,330 260,380 200,370
SE 120,980 180,950 140,990
SE 720,1320 750,1310 740,1360 720,1370
SE 1010,1310 1040,1320 1040,1460 1010,1465
SE 130,1400 180,1390 190,1470 160,1500
SE 820,400 850,430 860,490 840,510
`);

const grass = areas(`
NW 1160,24 1320,200 1530,480 1535,590 1568,650 N 20,620 60,500 110,370 105,270 150,165 210,160 245,210 290,205 420,520 585,513 650,513 735,525 815,550 990,610 1010,170 960,24
NW 585,24 655,24 600,75
NW 280,1140 340,1110 430,1220 325,1300
NW 1190,290 1320,200 1460,370 1430,395 1240,350
N 520,970 730,875 755,930 620,955
S 0,973 213,797 270,755 300,840 340,900 415,935 525,930 550,1020 600,1080 665,1135 690,1270 415,1390 355,1275 280,1168 60,1200 0,1110 SW 1568,1150 1500,1098 1430,1073
S 860,1300 930,1265 1040,1318 1155,1418 1130,1515 860,1515 825,1365 890,1350
S 1010,35 1110,25 1125,180 1035,170
S 1225,500 1300,505 1290,610 1240,690 1205,650
NE 300,212 370,180 405,175 455,310 430,335 350,350
NE 15,24 40,24 20,35
SE 865,175 900,120 950,55 1060,45 1108,170 905,290
SE 330,95 410,55 475,130 410,215 370,180
SE 1060,990 1110,970 1110,935 1170,940 1180,1060 1100,1050 1065,1020
SE 1430,860 1495,860 1490,1000 1465,1010 1435,980
`);
const darkGrass = areas(`
NW 1190,24 1325,24 1330,120 1300,150 1260,120 1210,60
NW 1190,290 1320,205 1400,280 1430,255 1500,250 1460,370 1390,375 1360,290 1310,310 1325,345 1290,370 1240,350 1230,310
NW 1495,24 1545,24 1568,250 1540,190
N 33,24 250,24 210,40 215,90 280,190 300,160 410,160 415,210 370,260 335,265 455,515 420,520 310,250 290,205 245,210 210,160 150,165 115,190 80,150 60,95
N 410,180 425,150 530,105 528,120 460,160
N 0,170 20,240 0,240
S 0,973 213,797 270,755 300,840 340,900 415,935 505,935 500,970 415,970 350,940 330,900 290,880 260,850 150,885 120,900 0,995
S 120,920 160,905 200,950 280,950 275,1020 315,1050 280,1085 230,1050 190,1045 200,1010 120,965
S 0,1100 60,1150 110,1200 60,1200
SW 1430,1073 1568,950 1568,975 1475,1065 1568,1130 1568,1150 1500,1098
S 230,1515 410,1410 418,1450 300,1515
`);
const water = areas(`
NW 1545,24 N 33,24 60,95 10,125 0,115
N 20,130 65,107 80,152 115,185 112,230 75,245 33,248
N 70,250 78,250 88,270 97,345 90,400 65,463 0,420 NW 1540,400 1568,345 N 40,300
N 495,465 510,460 522,478 507,493
N 862,502 905,465 918,488 878,528
NW 1535,150 1525,150 1515,175 1430,245 1438,252 1520,185
S 290,1515 620,1345 820,1290 860,1262 905,1280 905,1295 830,1300 640,1355 330,1515
S 810,1443 820,1443 826,1495 815,1490
SE 1055,1490 1195,1515 1055,1515
`);

const article4 = areas(`
NW 33,24 406,24 440,65 410,95 362,128 430,258 403,290 408,305 371,347 430,442 445,437 450,445 441,460 455,478 485,488 545,495 545,540 556,540 556,580 512,597 540,703 501,721 514,767 530,762 528,800 537,850 555,841 566,862 588,850 588,832 735,759 743,765 783,914 826,904 835,942 842,940 866,980 860,992 795,1030 788,1026 760,1045 760,1080 756,1085 760,1150 767,1210 767,1293 747,1295 747,1327 700,1340 678,1303 708,1275 693,1245 675,1247 650,1210 680,1200 678,1195 655,1195 648,1168 640,1166 582,1212 410,997 406,1002 370,977 315,955 327,910 313,870 240,903 216,877 253,853 253,825 167,728 129,779 107,755 114,708 81,695 92,658 90,573 33,540
NW 1548,1080 N 120,1240 250,1380 358,1530 S 381,65 250,257 302,297 300,312 318,333 220,363 220,410 0,467 SW 1568,462 1336,522 1337,557 1297,570 1290,537 1200,558 1175,588 1162,580 1167,553 1155,519 1172,505 1157,460 1092,472 1067,455 1072,430 1083,423 1062,383 1043,388 1002,255 1020,225 1052,178 1098,140 1120,95 1143,15 NW 1138,1530 1125,1490 1135,1373 1128,1355 1132,1330 1125,1296 1098,1294 1098,1286 1117,1282 1117,1260 1130,1255 1168,1258 1168,1270 1188,1272 1190,1250 1174,1240 1247,1283 1288,1246 1305,1275 1283,1300 1298,1325 1365,1255 1390,1222 1478,1118 1496,1140
N 290,556 585,513 650,513 735,525 815,550 970,623 920,655 705,783 485,888 437,905 440,928 408,940 404,922 302,862 272,908 252,900 265,872 260,858 268,845 190,825 125,797 93,775 97,735 200,685 240,655 290,602
N 949,24 1001,165 992,183 972,188 878,126 860,160 893,220 901,260 861,325 915,388 923,388 988,605 1010,597 1020,635 1075,630 1130,605 1208,556 1250,640 1282,740 1338,823 1346,808 1312,740 1308,690 1275,590 1245,540 1447,396 1436,370 NE 0,302 41,283 0,160 N 1530,105 1495,24
N 787,1360 800,1345 815,1365 858,1345 885,1417 908,1415 865,1308 882,1290 938,1450 893,1452 915,1512 1005,1505 1018,1490 1023,1530 S 1010,35 1045,235 1015,250 1018,278 980,275 962,287 925,252 893,252 893,225 908,218 835,0
S 1295,225 1328,230 1375,225 1383,262 1420,260 1440,263 1438,308 1400,315 1340,297 1342,325 1292,325
N 1523,1297 NE 0,1300 300,1343 350,1353 385,1390 405,1440 405,1475 412,1475 413,1530 SE 412,40 400,55 330,95 310,65 298,90 323,145 322,185 302,185 300,297 276,297 273,327 0,285 S 1490,278 1492,235 1505,230 1505,150 1485,148 1505,10 N 1500,1530
NE 648,1400 725,1480 690,1530 SE 645,103 800,265 837,597 685,660 625,668 612,658 550,645 540,590 500,598 435,615 350,658 215,525 575,0 NE 560,1530
SW 350,1040 600,890 735,840 797,830 826,915 775,933 757,888 722,905 745,1003 685,1038 668,995 590,1028 470,1110 435,1153
SW 1103,1190 1215,1080 1237,1113 1262,1115 1295,1150 1288,1160 1310,1185 1285,1222 1220,1148 1132,1235
SW 1568,708 1360,747 1285,740 1295,765 1262,800 1292,857 1272,880 1325,940 1342,993 1295,1053 1450,1200 1535,1320 1568,1307 S 62,1298 62,1262 45,1255 37,1200 60,1190 30,1155 0,1130 SW 1568,1150 1500,1098 1430,1073 S 0,973 213,797 190,745 255,700 250,668 0,708
S 600,612 680,635 720,700 900,865 975,970 985,962 1000,955 978,910 1000,905 1058,880 1055,845 1093,820 1088,800 1130,765 1128,735 1080,715 940,627 830,600 833,520 890,553 1090,635 1200,735 1225,735 1355,712 1440,712 1440,735 1512,777 1452,625 1452,537 1490,540 1495,550 1530,530 1550,547 1545,530 1495,430 1540,400 SE 0,403 50,450 33,485 65,510 60,555 33,580 103,740 80,793 130,847 152,845 200,822 270,908 285,910 285,930 415,1065 460,1137 480,1130 505,1155 500,1175 585,1267 620,1272 655,1297 705,1335 700,1342 727,1377 762,1298 770,1298 800,1258 835,1275 885,1272 988,1300 1005,1470 1048,1472 1048,1530 390,1530 390,1490 402,1485 315,1270 340,1250 335,1235 383,1210 413,1365 435,1363 435,1320 410,1185 375,1105 290,1000 258,937 215,955 188,900 175,905 190,945 160,958 37,877 S 1488,955 1465,913 1445,940 1420,945 1420,960 1450,965 1460,980 1450,1010 1568,1270 SE 135,1530 S 1328,1530 1262,1403 1215,1385 1183,1345 1153,1418 1040,1318 930,1265 825,1253 688,1268 665,1133 600,1075 550,1015 522,925 435,932 460,840 500,790 528,750 515,725 510,708 530,712 545,705 552,712 585,660
S 1090,958 1225,920 1220,890 1258,870 1247,825 1300,795 1330,780 1375,782 1383,828 1427,828 1420,917 1370,915 1338,938 1355,985 1245,1060 1225,1020 1180,990 1175,1000 1103,1003
S 1000,955 1030,1007 1072,995 1088,1080 1075,1085 1160,1265 1137,1262 1080,1165 1015,1055 985,970
`);

type Place = { x: number; y: number; text: string; anchor?: "start" | "end"; big?: boolean; station?: boolean };
const places: Place[] = [
  { x: 407.5, y: 891, text: "Hampstead", big: true },
  { x: 165, y: 1109.5, text: "West Hampstead", anchor: "end" },
  { x: 277, y: 1170, text: "Finchley Road", station: true },
  { x: 277, y: 1197.5, text: "& Frognal", station: true },
  { x: 277, y: 1225, text: "railway station", station: true },
  { x: 348, y: 1284, text: "Finchley Road", station: true },
  { x: 348, y: 1311.5, text: "tube station", station: true },
  { x: 208, y: 1300.5, text: "West Hampstead", anchor: "end", station: true },
  { x: 181, y: 1328, text: "tube station", anchor: "end", station: true },
  { x: 236.5, y: 1406.5, text: "South Hampstead" },
  { x: 489, y: 1424, text: "Swiss Cottage", station: true },
  { x: 489, y: 1451.5, text: "tube station", station: true },
  { x: 394.7, y: 1514.5, text: "South Hampstead", station: true },
  { x: 394.7, y: 1541.7, text: "railway station", station: true },
  { x: 177.5, y: 1660.5, text: "Kilburn High Road", anchor: "end", station: true },
  { x: 160, y: 1688.3, text: "railway station", anchor: "end", station: true },
  { x: 632, y: 966, text: "Hampstead Heath", anchor: "start", station: true },
  { x: 650, y: 994, text: "railway station", anchor: "start", station: true },
  { x: 1062.8, y: 1002.5, text: "Gospel Oak" },
  { x: 1313, y: 913.3, text: "Tufnell Park", anchor: "start" },
  { x: 1219, y: 1146.5, text: "Kentish Town", anchor: "start" },
  { x: 807.5, y: 1161.7, text: "Belsize Park", anchor: "end", station: true },
  { x: 805, y: 1189, text: "tube station", anchor: "end", station: true },
  { x: 1285, y: 1293.3, text: "Kentish Town West", anchor: "end", station: true },
  { x: 1110, y: 1321, text: "railway station", anchor: "start", station: true },
  { x: 1060.5, y: 1454.3, text: "Chalk Farm" },
  { x: 1271, y: 1456, text: "Camden", anchor: "start", big: true },
  { x: 1456.5, y: 1456, text: "Town", anchor: "end", big: true },
  { x: 1437.5, y: 1494, text: "Camden Road", anchor: "end", station: true },
  { x: 1288.5, y: 1521, text: "railway station", anchor: "start", station: true },
  { x: 1360.5, y: 1592.7, text: "Camden Town", anchor: "end", station: true },
  { x: 1348, y: 1620, text: "tube station", anchor: "end", station: true },
  { x: 1838, y: 860.7, text: "Holloway", anchor: "start" },
  { x: 1889, y: 972.3, text: "Lower Holloway", anchor: "start" },
  { x: 1942, y: 1060, text: "Holloway Road", anchor: "start", station: true },
  { x: 1958, y: 1087.7, text: "tube station", anchor: "start", station: true },
  { x: 1799, y: 1234, text: "Caledonian Road", anchor: "start", station: true },
  { x: 1826, y: 1261.7, text: "tube station", anchor: "start", station: true },
  { x: 1885, y: 1430.7, text: "Caledonian Road", anchor: "start", station: true },
  { x: 1909, y: 1458, text: "& Barnsbury", anchor: "start", station: true },
  { x: 1898, y: 1486, text: "railway station", anchor: "start", station: true },
  { x: 1923, y: 1588, text: "Barnsbury", anchor: "start" },
];

const PlaceName = styled.text<{ $big?: boolean; $station?: boolean }>`
  font-family: "Noto Sans", "Open Sans", sans-serif;
  font-size: ${(p) => (p.$big ? 27.2 : 22.2)}px;
  word-spacing: 0;
  fill: ${(p) => (p.$station ? "#34343a" : "#0c0c10")};
  stroke: rgba(250, 249, 244, 0.8);
  stroke-width: 4px;
  stroke-linejoin: round;
  paint-order: stroke;
`;

const DatasetMap = () => (
  <svg width="1917" height="997" viewBox="64 728 1917 997" fill="none" strokeLinejoin="round">
    <rect x="64" y="728" width="1917" height="997" fill="#dfe0d0" />
    <path d={openLand} fill="#e5e6d9" />
    <g stroke="#cdc5a9">
      <path d={minorRoads} strokeWidth="23" strokeDasharray="34 4 19 7 48 3 12 9" />
      <path d={mediumRoads} strokeWidth="28" strokeDasharray="42 5 26 4 15 8" />
      <path d={majorRoads} strokeWidth="34" strokeDasharray="52 4 30 6" />
    </g>
    <g stroke="#dfe0d0">
      <path d={minorRoads} strokeWidth="10" />
      <path d={mediumRoads} strokeWidth="11" />
      <path d={majorRoads} strokeWidth="13" />
    </g>
    <path d={buildings} fill="#cdc5a9" />
    <path d={grass} fill="#cde1b8" />
    <path d={darkGrass} fill="#b9d59d" />
    <path d={streams} stroke="#a9cbdd" strokeWidth="4" />
    <path d={water} fill="#95c0e2" />
    <path d={railFaint} stroke="#cfc8c0" strokeWidth="3" opacity="0.6" />
    <g stroke="#fff" strokeLinecap="round">
      <path d={minorRoads} strokeWidth="3.2" />
      <path d={mediumRoads} strokeWidth="4.8" />
      <path d={majorRoads} strokeWidth="7.4" />
    </g>
    <path d={railMain} stroke="#bcb2a8" strokeWidth="3" />
    <path d={railHeavy} stroke="#bcb2a8" strokeWidth="8" />
    <path d={railHeavy} stroke="#cbc3ba" strokeWidth="1" />
    <path d={boundary} stroke="#fff" strokeWidth="5" />
    <path d={boundary} stroke="#b7b7ba" strokeWidth="4.5" strokeDasharray="9 5" />
    {places.map((p, i) => (
      <PlaceName key={i} x={p.x} y={p.y} textAnchor={p.anchor ?? "middle"} $big={p.big} $station={p.station}>
        {p.text}
      </PlaceName>
    ))}
    <path d={article4} fill="#28a197" fillRule="evenodd" stroke="#fff" strokeWidth="2" strokeOpacity="0.5" paintOrder="stroke" />
    <circle cx="1937" cy="1681" r="24" fill="#fff" />
    <circle cx="1937" cy="1681" r="14.7" fill="#000" />
    <circle cx="1937" cy="1673.6" r="2.6" fill="#fff" />
    <path d="M1934.3 1678.6h4.2v8h1.600v3h-6.600v-3h1.200v-5h-1z" fill="#fff" stroke="#fff" strokeWidth="1" />
  </svg>
);

const crownSide = (
  <>
    <circle cx="4" cy="27.5" r="3.9" />
    <circle cx="6.4" cy="17.8" r="3.9" />
    <circle cx="14.6" cy="12.7" r="3.9" />
    <circle cx="24.8" cy="15.8" r="3.9" />
    <path d="M18.6 25c2 1.6 3 3.600 2.800 5.400-.2 1.700-.8 2.600-1.700 3.700 1 1.300 2 2.700 3.900 2.900 1.700.2 2.900-.8 2.800-2.700 1.900.8 2.600 2.300 2.300 3.900-.4 2-2.400 2.900-5 2.500 1.400 1.400 3.300 2.100 5.500 1.600 2.500-.5 4.300-2.700 4.300-6.200-1.500 1.300-3 1.500-4.300.9v-5.500c1.300.5 2.900.6 4.500-.3L32 29h4v22.200c-9.600 0-18.300.5-25.800 1.900L4.200 33c2 .3 3.300 1.600 4.300 3.700.3-1.200.1-2.200-.4-3.300 2.300.5 4.300 2.600 4.400 5.300-1.300-.4-2.500-.2-3 .7.9 2.400 2.600 3.600 4.600 3.300 2-.3 3.200-2 2.800-4.200-.3-1.200-1.200-2-2.600-2.400 1.200-.7 1.800-1.500 2-2.400-.9-.9-1.500-2-1.500-3.400 0-2.100 1.500-3.900 3.800-5.300z" />
  </>
);

const Crown = () => (
  <svg width="72" height="53" viewBox="0 0 72 53" fill="#fff">
    {crownSide}
    <g transform="matrix(-1 0 0 1 72 0)">{crownSide}</g>
    <path d="M32.600 0h6.800L37.800 5.500c1.700-.2 3-.8 4.200-1.700v7.500c-1.300-1.300-2.700-1.900-4.200-2l2.200 6.700c1.200 4.500-.3 7.800-4 7.800s-5.200-3.300-4-7.800l2.200-6.700c-1.500.1-2.900.7-4.200 2V3.800c1.200.9 2.500 1.500 4.200 1.700z" />
  </svg>
);

const Chevron = () => (
  <svg width="12" height="22" viewBox="0 0 12 22" fill="none" stroke="#505a5f" strokeWidth="2">
    <path d="M1 1l9 10-9 10" />
  </svg>
);

const crumbs = [
  { text: "Home", w: 84, track: -0.3 },
  { text: "Organisations", w: 192, track: -0.1 },
  { text: "Borchester District Council", w: 376, track: 0.1 },
  { text: "Article 4 direction area", w: 316, track: 0.1 },
];

const records: { key: string; value: string; url?: boolean; track?: number; keyTrack?: number }[] = [
  { key: "Number of records", value: "10", track: -3 },
  { key: "Number of fields\nsupplied", value: "5/11 (45%)", track: -0.8 },
  { key: "Number of fields\nmatched", value: "1/11 (9%)", track: -2 },
  {
    key: "Data URL",
    value: "https://maps.borechester.gov.uk/\narcgis/rest/services/PLANNING/\nA4D_CSB/MapServer/0/query?\noutFields=*&where=1%3D1&f=geojson",
    url: true,
    keyTrack: 0,
  },
  {
    key: "Source\ndocumentation\u00a0 URL",
    value: "https://www.borechester.gov.uk/\nplanning/data/article-4-directions",
    url: true,
    keyTrack: 0.4,
  },
  { key: "Licence", value: "Open Government Licence", track: -0.35 },
  { key: "Data URL last\naccessed", value: "03:45 3 July 2024", track: 0.6, keyTrack: 0.4 },
  { key: "Data URL last\nupdated", value: "03:42 28 June 2024", track: 0.6, keyTrack: 0.4 },
];

export default function App() {
  return (
    <Page>
      <GlobalStyle />
      <Header>
        <Logo>
          <Crown />
          <LogoText>GOV.UK</LogoText>
        </Logo>
        <ServiceName>Submit and update housing and planning data</ServiceName>
      </Header>
      <Main>
        <BlueBar />
        <Crumbs>
          {crumbs.map((c, i) => (
            <Crumb key={c.text} $w={c.w} $track={c.track}>
              {i > 0 && <Chevron />}
              <a>{c.text}</a>
            </Crumb>
          ))}
        </Crumbs>
        <Caption>Borchester District Council</Caption>
        <Title>Article 4 direction area</Title>
        <DatasetNav>
          <NavLabel>Article 4 direction area</NavLabel>
          <Tab $active $w={250} $track={0.1}>Dataset details</Tab>
          <Tab $w={125} $track={0.15}>Tasklist</Tab>
          <Tab $w={160} $track={-0.9}>Data view</Tab>
        </DatasetNav>
        <MapFrame>
          <DatasetMap />
        </MapFrame>
        <SectionTitle $top={67}>Dataset details</SectionTitle>
        <Summary>
          {records.map((r) => (
            <Row key={r.key}>
              <Key $track={r.keyTrack}>{r.key}</Key>
              {r.url ? <UrlValue><a>{r.value}</a></UrlValue> : <Value $track={r.track}>{r.value}</Value>}
            </Row>
          ))}
        </Summary>
        <SectionTitle $top={120}>Dataset actions</SectionTitle>
        <Actions>
          <Button $w={286}>Check dataset</Button>
          <Button $secondary $w={338}>Resubmit dataset</Button>
        </Actions>
      </Main>
    </Page>
  );
}
